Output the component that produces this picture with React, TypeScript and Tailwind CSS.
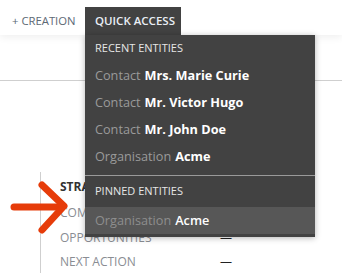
export default function App() {
  const recent = [
    { type: "Contact", name: "Mrs. Marie Curie" },
    { type: "Contact", name: "Mr. Victor Hugo" },
    { type: "Contact", name: "Mr. John Doe" },
    { type: "Organisation", name: "Acme" },
  ];

  return (
    <div className="relative w-[342px] h-[273px] overflow-hidden bg-white font-['Open_Sans',sans-serif]">
      {/* top bar */}
      <div className="relative z-10 h-[35px] bg-white shadow-[0_2px_8px_rgba(0,0,0,0.07)] flex items-end">
        <div className="h-[28px] w-[85px] flex items-center pl-[12px] text-[11.3px] text-[#5d6975] uppercase">
          + Creation
        </div>
        <div className="h-[28px] w-[96px] flex items-center pl-[10px] bg-[#424242] text-[11.5px] font-semibold text-[#e9eef5] uppercase">
          Quick Access
        </div>
      </div>

      {/* page content under the menu */}
      <div className="mt-[45px] border-t border-[#cfcfcf]">
        <div className="mt-[91px] ml-[40px] border-l border-[#cfcfcf] pl-[19px] pt-[2px]">
          <div className="h-[25px] flex items-center text-[12px] font-bold text-[#333] uppercase">
            Strategy
          </div>
          <div className="h-[27px] flex items-center text-[12px] text-[#8a8d93] uppercase">
            Comments
          </div>
          <div className="h-[24px] flex items-center text-[12px] text-[#8a8d93] uppercase">
            <span className="w-[160px]">Opportunities</span>
            <span className="text-[#222]">—</span>
          </div>
          <div className="h-[24px] flex items-center text-[12px] text-[#8a8d93] uppercase">
            <span className="w-[160px]">Next Action</span>
            <span className="text-[#222]">—</span>
          </div>
        </div>
      </div>

      {/* quick access dropdown */}
      <div className="absolute left-[85px] top-[35px] z-20 w-[230px] bg-[#424242] shadow-[0_1px_6px_rgba(0,0,0,0.3)] pb-[3px]">
        <div className="h-[27px] flex items-center px-[10px] text-[11px] text-[#e6e6e6] uppercase">
          Recent Entities
        </div>
        {recent.map((r) => (
          <div key={r.name} className="h-[27px] flex items-center px-[10px] text-[12.7px]">
            <span className="text-[#9a9a9a]">{r.type}</span>
            <span className="ml-[4px] font-bold text-white">{r.name}</span>
          </div>
        ))}
        <div className="mt-[5px] border-t border-[#9a9a9a]" />
        <div className="h-[31px] flex items-center px-[10px] text-[11px] text-[#e6e6e6] uppercase">
          Pinned Entities
        </div>
        <div className="h-[27px] flex items-center px-[10px] text-[12.7px] bg-[#575757]">
          <span className="text-[#8e8e8e]">Organisation</span>
          <span className="ml-[4px] font-semibold text-white">Acme</span>
        </div>
      </div>

      {/* red annotation arrow */}
      <svg
        className="absolute left-[8px] top-[180px] z-30"
        width="62"
        height="56"
        viewBox="0 0 62 56"
        fill="none"
        stroke="#e63c0a"
        strokeWidth="7"
        strokeLinecap="round"
        strokeLinejoin="round"
      >
        <path d="M6 27 H54" />
        <path d="M34 5 L56 26 L34 50" />
      </svg>
    </div>
  );
}
